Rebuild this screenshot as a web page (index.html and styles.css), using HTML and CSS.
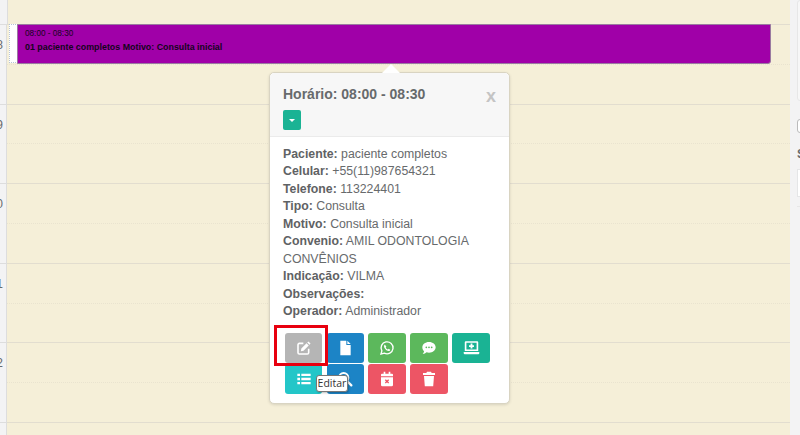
FILE: index.html
```html
<!DOCTYPE html>
<html lang="pt">
<head>
<meta charset="utf-8">
<title>Agenda</title>
<link rel="stylesheet" href="styles.css">
</head>
<body>
<div class="page">
  <div class="calendar">
    <div class="top"></div>
    <div class="hour"><div class="gutter"><span>08</span></div><div class="slot"></div></div>
    <div class="half"><div class="gutter"></div><div class="slot"></div></div>
    <div class="hour"><div class="gutter"><span>09</span></div><div class="slot"></div></div>
    <div class="half"><div class="gutter"></div><div class="slot"></div></div>
    <div class="hour"><div class="gutter"><span>10</span></div><div class="slot"></div></div>
    <div class="half"><div class="gutter"></div><div class="slot"></div></div>
    <div class="hour"><div class="gutter"><span>11</span></div><div class="slot"></div></div>
    <div class="half"><div class="gutter"></div><div class="slot"></div></div>
    <div class="hour"><div class="gutter"><span>12</span></div><div class="slot"></div></div>
    <div class="half"><div class="gutter"></div><div class="slot"></div></div>
    <div class="hour last"><div class="gutter"></div><div class="slot"></div></div>

    <div class="mirror"></div>
    <div class="event">
      <div class="event-time">08:00 - 08:30</div>
      <div class="event-title">01 paciente completos Motivo: Consulta inicial</div>
    </div>

    <div class="popover">
      <div class="arrow"></div>
      <header class="pop-head">
        <h3 class="pop-title">Horário: 08:00 - 08:30</h3>
        <span class="close">x</span>
        <button class="caret-btn" type="button"><span class="caret"></span></button>
      </header>
      <div class="pop-body">
        <p><b>Paciente:</b> paciente completos</p>
        <p><b>Celular:</b> +55(11)987654321</p>
        <p><b>Telefone:</b> 113224401</p>
        <p><b>Tipo:</b> Consulta</p>
        <p><b>Motivo:</b> Consulta inicial</p>
        <p><b>Convenio:</b> AMIL ODONTOLOGIA CONVÊNIOS</p>
        <p><b>Indicação:</b> VILMA</p>
        <p><b>Observações:</b></p>
        <p><b>Operador:</b> Administrador</p>
        <div class="actions">
          <button class="act gray" type="button">
            <svg viewBox="0 0 24 24"><path d="M11 5H5a2 2 0 0 0-2 2v12a2 2 0 0 0 2 2h12a2 2 0 0 0 2-2v-6" fill="none" stroke="#fff" stroke-width="2.4"/><path d="M18.600 2.200l3.200 3.200-1.600 1.700-3.300-3.300zM15.800 5l3.300 3.300-7.800 7.800-4 .8.7-4.100z" fill="#fff"/></svg>
          </button>
          <button class="act blue" type="button">
            <svg viewBox="0 0 24 24"><path d="M5 1h9v6.500h6.500V23H5zM15.500 1l5 5h-5z" fill="#fff"/></svg>
          </button>
          <button class="act green" type="button">
            <svg viewBox="0 0 24 24"><path d="M3 21l1.300-4.700A9 9 0 1 1 8 19.800z" fill="none" stroke="#fff" stroke-width="2"/><path d="M9 7.200c-.6 0-1.500.8-1.500 2.300 0 3 3.800 6.800 6.800 7 1.500 0 2.600-1 2.500-2l-2.400-1.300-1 1.200c-1.300-.4-2.800-2-3.300-3.300l1-1z" fill="#fff"/></svg>
          </button>
          <button class="act green" type="button">
            <svg viewBox="0 0 24 24"><path d="M12 3c5.800 0 10 3.600 10 8s-4.200 8-10 8c-1.300 0-2.500-.2-3.600-.5C7 19.700 5 21 2.500 21c1.200-1.300 2-2.800 2.200-4.100C3 15.500 2 13.400 2 11c0-4.400 4.200-8 10-8z" fill="#fff"/><circle cx="8" cy="11" r="1.300" fill="#5cb85c"/><circle cx="12" cy="11" r="1.300" fill="#5cb85c"/><circle cx="16" cy="11" r="1.300" fill="#5cb85c"/></svg>
          </button>
          <button class="act teal wide" type="button">
            <svg viewBox="0 0 24 24"><path d="M4 3h16a1.500 1.500 0 0 1 1.500 1.500V17h-19V4.500A1.500 1.500 0 0 1 4 3zM4.800 5.300v9.400h14.400V5.300zM1 18.500h22V20a1.500 1.500 0 0 1-1.500 1.500h-19A1.500 1.500 0 0 1 1 20z" fill="#fff"/><path d="M10.700 6.500h2.600v2.200h2.200v2.600h-2.200v2.200h-2.600v-2.200H8.500V8.700h2.200z" fill="#fff"/></svg>
          </button>
          <button class="act cyan" type="button">
            <svg viewBox="0 0 24 24"><path d="M2 4h4v3.500H2zM8 4h14v3.500H8zM2 10.200h4v3.500H2zM8 10.200h14v3.500H8zM2 16.500h4V20H2zM8 16.500h14V20H8z" fill="#fff"/></svg>
          </button>
          <button class="act blue" type="button">
            <svg viewBox="0 0 24 24"><circle cx="10" cy="10" r="7" fill="none" stroke="#fff" stroke-width="3"/><path d="M15 15l6.500 6.500" stroke="#fff" stroke-width="3.500" stroke-linecap="round"/></svg>
          </button>
          <button class="act red" type="button">
            <svg viewBox="0 0 24 24"><path d="M7 1h2.500v3h5V1H17v3h2.500A1.500 1.500 0 0 1 21 5.500V8H3V5.500A1.500 1.500 0 0 1 4.500 4H7zM3 9.500h18V21a2 2 0 0 1-2 2H5a2 2 0 0 1-2-2z" fill="#fff"/><path d="M9.500 13l5 5M14.500 13l-5 5" stroke="#ed5565" stroke-width="2"/></svg>
          </button>
          <button class="act red" type="button">
            <svg viewBox="0 0 24 24"><path d="M9 1h6l1 2h5v3H3V3h5zM4.500 7.500h15L18.300 23H5.700z" fill="#fff"/></svg>
          </button>
        </div>
      </div>
    </div>

    <div class="highlight"></div>
    <div class="tooltip">Editar</div>
  </div>

  <aside class="side">
    <div class="side-card"></div>
    <div class="side-check"></div>
    <div class="side-label">S</div>
    <div class="side-input"></div>
    <div class="side-rule"></div>
  </aside>
</div>
</body>
</html>
```
FILE: styles.css
```css
* { box-sizing: border-box; }
html, body { margin: 0; height: 100%; overflow: hidden; }
body {
  background: #f3f3f4;
  font-family: "Liberation Sans", Arial, sans-serif;
  color: #676a6c;
}
.page { display: flex; height: 435px; overflow: hidden; }
.calendar { position: relative; width: 790px; flex: none; }
.top { height: 24px; background: #f5efd8; margin-left: 7px; border-left: 1px solid #ddd; }
.hour, .half { display: flex; height: 39.8px; }
.hour.last { height: 13px; }
.gutter {
  width: 7px;
  flex: none;
  display: flex;
  justify-content: flex-end;
  align-items: flex-start;
  overflow: hidden;
  border-right: 1px solid #ddd;
  font-size: 12px;
  line-height: 14px;
  padding: 13px 3px 0 0;
}
.gutter span { flex: none; }
.slot { flex: 1; background: #f5efd8; }
.hour .slot { border-top: 1px solid #e2ddcf; }
.hour .gutter { border-top: 1px solid #ddd; }
.half .slot { border-top: 1px dotted #e9e3cf; }
.mirror {
  position: absolute;
  left: 9px; top: 24px;
  width: 9px; height: 39px;
  background: #fff;
  border: 1px dotted #b5c3d6;
  border-right: 0;
}
.event {
  position: absolute;
  left: 17px; top: 24px;
  width: 754px; height: 40px;
  background: #a000a8;
  border: 1px solid #9a7aa0;
  border-radius: 0 0 3px 0;
  padding: 3px 7px;
  color: #14041c;
}
.event-time { font-size: 8.200px; line-height: 11px; }
.event-title { font-size: 8.900px; line-height: 13px; margin-top: 2px; font-weight: bold; }
.popover {
  position: absolute;
  left: 269px; top: 72px;
  width: 241px; height: 332px;
  background: #fff;
  border: 1px solid #d9d4c2;
  border-radius: 5px;
  box-shadow: 0 1px 3px rgba(0,0,0,.12);
}
.arrow {
  position: absolute;
  left: 112px; top: -9px;
  width: 0; height: 0;
  border-left: 9px solid transparent;
  border-right: 9px solid transparent;
  border-bottom: 9px solid #fff;
}
.pop-head {
  position: relative;
  height: 64px;
  background: #f7f7f7;
  border-bottom: 1px solid #ebebeb;
  border-radius: 5px 5px 0 0;
  padding: 13px 13px 0;
}
.pop-title { margin: 0; font-size: 14px; line-height: 16px; font-weight: bold; color: #676a6c; }
.close {
  position: absolute;
  right: 13px; top: 13px;
  font-size: 18px;
  line-height: 20px;
  font-weight: bold;
  color: #c4c4c4;
}
.caret-btn {
  display: flex;
  align-items: center;
  justify-content: center;
  width: 18px; height: 20px;
  margin-top: 8px;
  padding: 0;
  border: 0;
  border-radius: 2px;
  background: #1ab394;
}
.caret {
  width: 0; height: 0;
  border-left: 3px solid transparent;
  border-right: 3px solid transparent;
  border-top: 3px solid #fff;
}
.pop-body { padding: 9px 13px 0; }
.pop-body p { margin: 0; font-size: 12.300px; line-height: 17.450px; }
.pop-body b { color: #5f6264; }
.actions {
  display: grid;
  grid-template-columns: repeat(5, 37.800px);
  grid-auto-rows: 30px;
  column-gap: 4.100px;
  row-gap: 1px;
  margin: 12px 0 0 1.700px;
}
.act {
  display: flex;
  align-items: center;
  justify-content: center;
  padding: 0;
  border: 0;
  border-radius: 3px;
}
.act svg { width: 16px; height: 16px; display: block; }
.act.wide svg { width: 17px; height: 17px; }
.gray { background: #b5b5b5; }
.blue { background: #1c84c6; }
.green { background: #5cb85c; }
.teal { background: #1ab394; }
.cyan { background: #23c6c8; }
.red { background: #ed5565; }
.highlight {
  position: absolute;
  left: 274px; top: 325px;
  width: 54px; height: 41px;
  border: 3px solid #e8000f;
}
.tooltip {
  position: absolute;
  left: 316px; top: 375px;
  width: 32px; height: 17px;
  background: #fff;
  border: 1px solid #777;
  border-radius: 3px;
  box-shadow: 1px 1px 2px rgba(0,0,0,.25);
  font-family: "Open Sans", sans-serif;
  font-size: 10.500px;
  line-height: 15px;
  text-align: center;
  color: #333;
}
.side { flex: 1; min-width: 0; padding-left: 7px; overflow: hidden; }
.side-card { height: 101px; background: #f7f7f7; border: 1px solid #e7e7e7; border-radius: 3px; margin-right: -10px; }
.side-check { width: 14px; height: 14px; margin-top: 18px; background: #fff; border: 1px solid #bbb; border-radius: 3px; }
.side-label { margin-top: 14px; font-size: 12px; line-height: 14px; font-weight: bold; }
.side-input { height: 28px; margin-top: 8px; background: #fff; border: 1px solid #e5e6e7; margin-right: -10px; }
.side-rule { height: 1px; margin-top: 9px; background: #e7e7e7; margin-right: -10px; }
```
